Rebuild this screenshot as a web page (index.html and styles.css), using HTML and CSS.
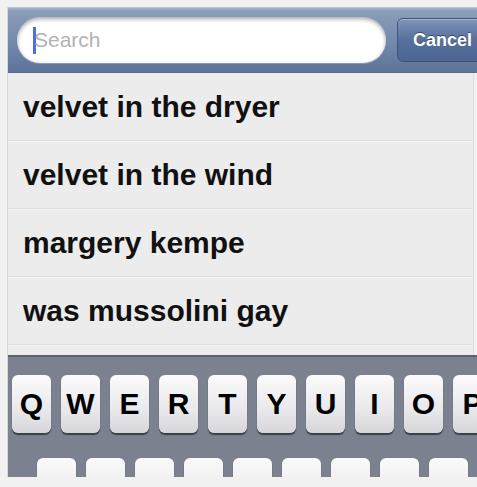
FILE: index.html
```html
<!DOCTYPE html>
<html lang="en">
<head>
  <meta charset="UTF-8">
  <title>Search</title>
  <link rel="stylesheet" href="styles.css">
</head>
<body>

<div class="screen">
  <div class="searchbar">
    <div class="field">
      <span class="cursor"></span>
      <span class="placeholder">Search</span>
    </div>
    <button class="cancel">Cancel</button>
  </div>

  <ul class="results">
    <li>velvet in the dryer</li>
    <li>velvet in the wind</li>
    <li>margery kempe</li>
    <li>was mussolini gay</li>
    <li class="spacer"></li>
  </ul>

  <div class="keyboard">
    <div class="row">
      <span class="key">Q</span>
      <span class="key">W</span>
      <span class="key">E</span>
      <span class="key">R</span>
      <span class="key">T</span>
      <span class="key">Y</span>
      <span class="key">U</span>
      <span class="key">I</span>
      <span class="key">O</span>
      <span class="key">P</span>
    </div>
    <div class="row row2">
      <span class="key">A</span>
      <span class="key">S</span>
      <span class="key">D</span>
      <span class="key">F</span>
      <span class="key">G</span>
      <span class="key">H</span>
      <span class="key">J</span>
      <span class="key">K</span>
      <span class="key">L</span>
    </div>
  </div>
</div>

</body>
</html>
```

FILE: styles.css
```css
body {
  margin: 0;
  background: #f1f1f1;
  font-family: "Liberation Sans", Arial, sans-serif;
  overflow: hidden;
}

.screen {
  margin: 7px 0 0 7px;
  width: 480px;
  height: 470px;
  overflow: hidden;
  border-left: 1px solid #d8d8d8;
}

.searchbar {
  height: 66px;
  display: flex;
  align-items: center;
  gap: 11px;
  padding: 0 0 0 9px;
  background: linear-gradient(#a3b3cb 0px, #8a9dba 3px, #6f86a9 40px, #5c7398 64px, #4b6289 66px);
  border-top: 1px solid #b7c3d6;
  box-sizing: border-box;
}

.field {
  width: 369px;
  height: 46px;
  margin-top: -1px;
  background: #fff;
  border-radius: 23px;
  box-shadow: inset 0 2px 4px rgba(0,0,0,0.35), 0 1px 0 rgba(255,255,255,0.25);
  display: flex;
  align-items: center;
  padding-left: 16px;
  box-sizing: border-box;
}

.cursor {
  width: 3px;
  height: 27px;
  background: #4a6fe0;
  margin-right: -2px;
}

.placeholder {
  font-size: 21px;
  color: #b3b3b3;
}

.cancel {
  height: 44px;
  width: 90px;
  margin-top: -1px;
  border: 1px solid #3f5579;
  border-radius: 6px;
  background: linear-gradient(#7f95b8, #55709a 50%, #4a658f);
  box-shadow: inset 0 1px 0 rgba(255,255,255,0.3);
  color: #fff;
  font-family: "Liberation Sans", Arial, sans-serif;
  font-weight: bold;
  font-size: 18px;
  text-align: left;
  padding: 0 0 0 15px;
  text-shadow: 0 -1px 0 rgba(0,0,0,0.4);
}

.results {
  list-style: none;
  margin: 0;
  padding: 0;
  background: #ececec;
  border-right: 1px solid #dcdcdc;
  width: 465px;
}

.results li {
  height: 67px;
  line-height: 67px;
  padding-left: 15px;
  font-size: 30px;
  font-weight: bold;
  color: #111;
  border-bottom: 1px solid #dedede;
  box-shadow: 0 1px 0 #f6f6f6;
}

.results li.spacer {
  height: 10px;
  border-bottom: none;
  box-shadow: none;
}

.keyboard {
  background: #7b818f;
  border-top: 2px solid #5d6270;
  padding: 18px 0 0 4px;
  height: 122px;
  box-sizing: border-box;
}

.row {
  display: flex;
  gap: 10px;
}

.row2 {
  margin-top: 25px;
  padding-left: 25px;
}

.key {
  flex: none;
  width: 39px;
  height: 58px;
  border-radius: 6px;
  background: linear-gradient(#fbfbfb, #e9e9ec 60%, #d6d6da);
  box-shadow: 0 2px 1px #3a3e47;
  font-size: 30px;
  font-weight: bold;
  color: #000;
  display: flex;
  align-items: center;
  justify-content: center;
}
```
